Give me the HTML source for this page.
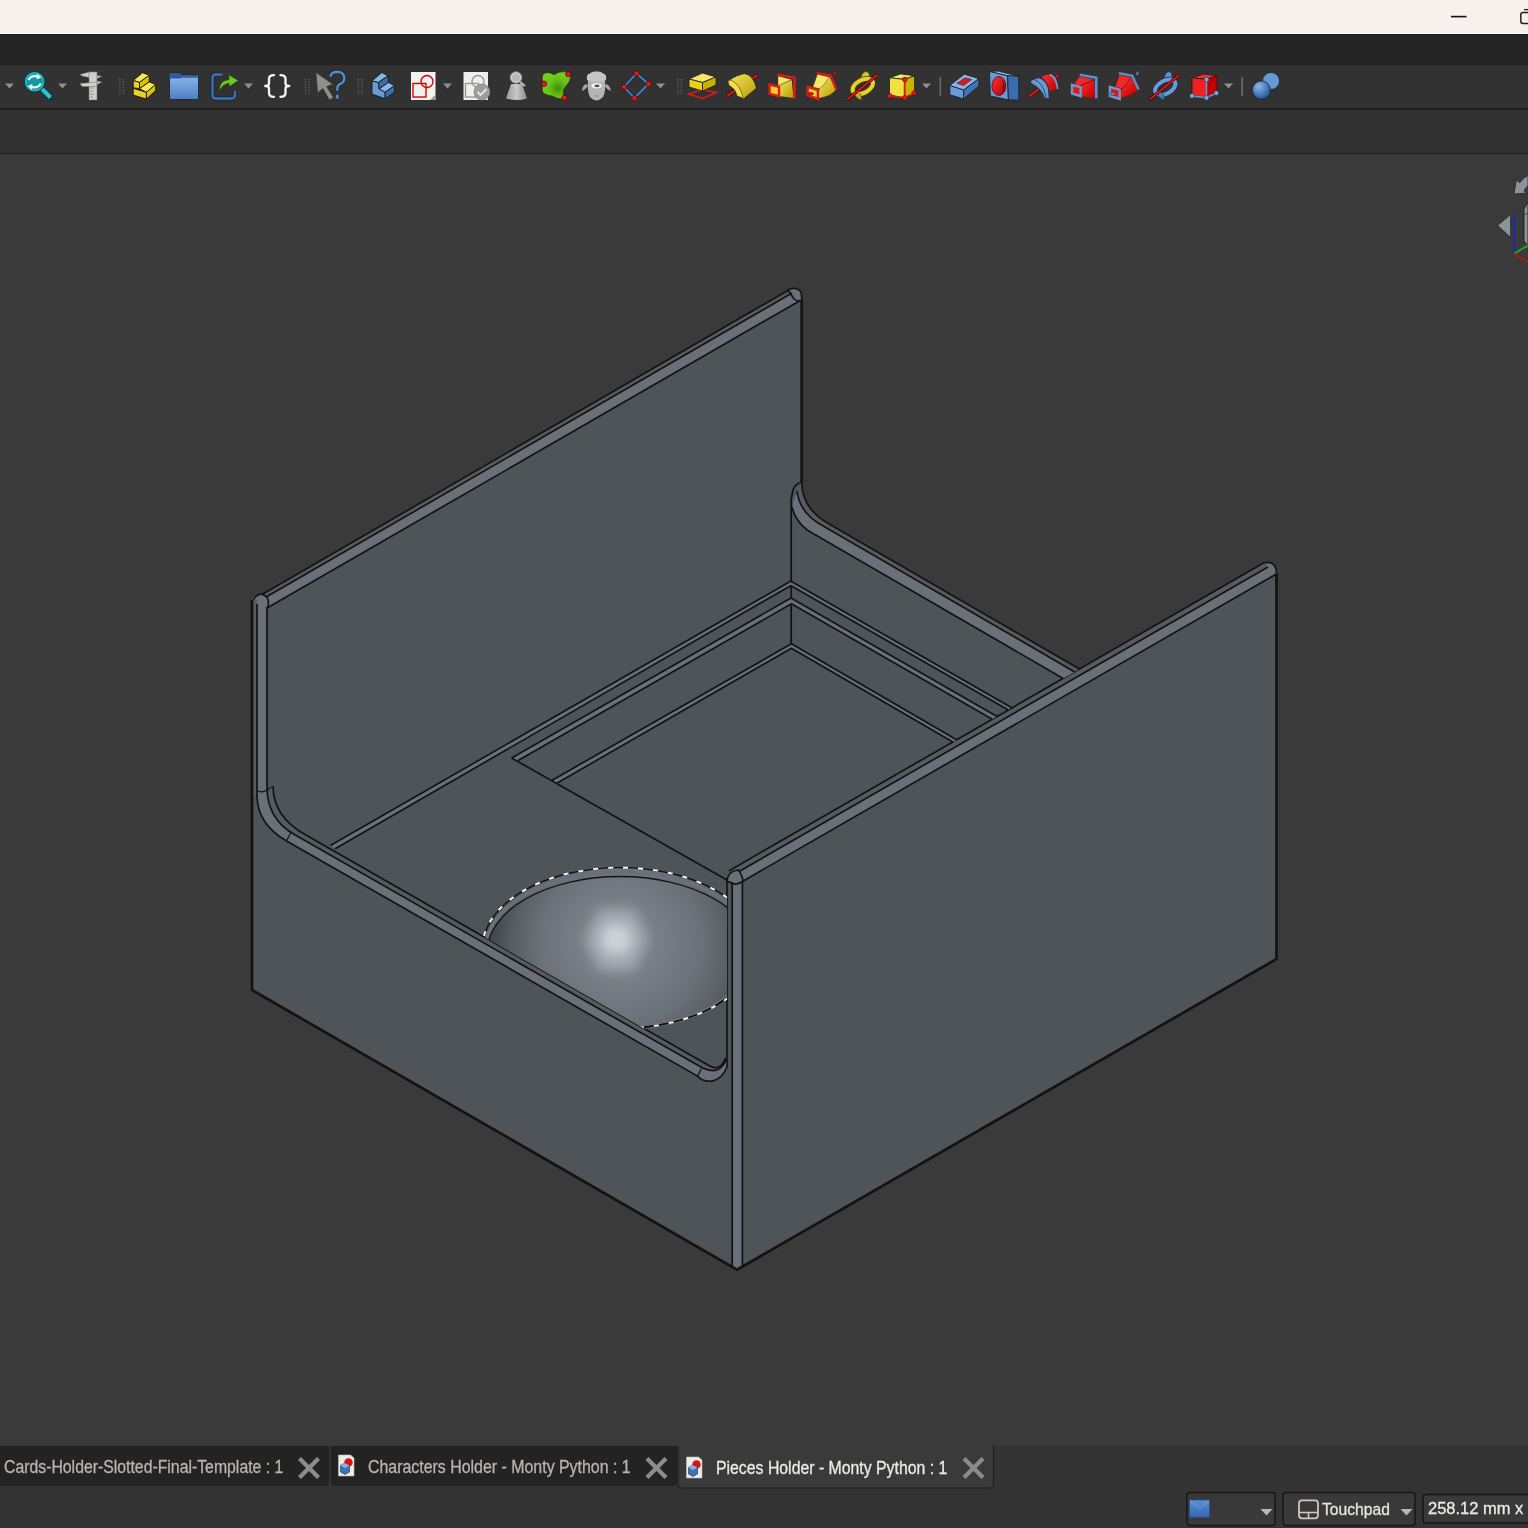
<!DOCTYPE html>
<html><head><meta charset="utf-8">
<style>
html,body{margin:0;padding:0;}
body{width:1528px;height:1528px;overflow:hidden;position:relative;background:#3a3a3a;font-family:"Liberation Sans",sans-serif;}
.abs{position:absolute;}
#title{left:0;top:0;width:1528px;height:33px;background:#f8f0eb;}
#title2{left:0;top:33px;width:1528px;height:1px;background:#fffdf9;}
#menu{left:0;top:34px;width:1528px;height:31px;background:#252525;border-top:1px solid #1c1c1c;box-sizing:border-box;border-bottom:1px solid #212121;}
#tb1{left:0;top:65px;width:1528px;height:43px;background:#323232;}
#ln1{left:0;top:108px;width:1528px;height:2px;background:#1f1f1f;}
#tb2{left:0;top:110px;width:1528px;height:43px;background:#323232;}
#ln2{left:0;top:153px;width:1528px;height:1px;background:#1f1f1f;}
#view{left:0;top:154px;width:1528px;height:1292px;background:#3a3a3a;}
#bottom{left:0;top:1446px;width:1528px;height:82px;background:#333333;}
svg{position:absolute;left:0;top:0;}
.t{position:absolute;font-size:17px;line-height:20px;white-space:nowrap;transform-origin:0 0;-webkit-text-stroke:0.3px currentColor;}
</style></head><body>
<div class="abs" id="title"></div><div class="abs" id="title2"></div>
<div class="abs" id="menu"></div>
<div class="abs" id="tb1"></div><div class="abs" id="ln1"></div>
<div class="abs" id="tb2"></div><div class="abs" id="ln2"></div>
<div class="abs" id="view"></div>
<div class="abs" id="bottom"></div>
<svg width="1528" height="1528" viewBox="0 0 1528 1528">
<path fill="#4f5459" d="M252,600 Q254,594 262,594.5 L788,290.4 Q800,288 802,300 L801.7,482 Q801.7,508 827.4,522.9 L1079.4,669.1 L1263.5,563 Q1274,562 1276.5,574 L1276.5,959 L737,1269.7 L252,990 Z"/>
<polygon fill="#565b60" points="262.0,594.5 788.0,290.4 792.0,293.1 267.0,596.6"/>
<polygon fill="#6b7078" points="262.0,599.5 795.0,291.4 800.3,300.4 266.6,608.3"/>
<path fill="#6b7078" stroke="#131313" stroke-width="1.7" d="M253,602 Q254,595 262,594 L267,597 Q270,604 267,608 Q260,611 257,607 Z"/>
<path fill="#6b7078" stroke="#131313" stroke-width="1.7" d="M788,290 Q796,286 801,292 L802,300 Q797,302 794,299 Z"/>
<path fill="#6b7078" stroke="#131313" stroke-width="1.7" d="M1263.5,563 Q1270,561 1274,565 Q1277,569 1276.5,574 L1272,575 Q1270,570 1266,568 Z"/>
<line x1="262" y1="594.5" x2="788" y2="290.4" stroke="#131313" stroke-width="1.7"/>
<line x1="267" y1="596.6" x2="792" y2="293.1" stroke="#131313" stroke-width="1.7"/>
<line x1="266.6" y1="608.3" x2="800.3" y2="300.4" stroke="#131313" stroke-width="1.7"/>
<rect x="252" y="600" width="5" height="195" fill="#565b60"/>
<path fill="#6b7078" d="M257,606 L257,795 Q257,824.1 287,841.3 L697.5,1076.1 C705,1084 720,1084 727,1067 L726.3,1059 Q720,1076 702.7,1068.1 L294,834.3 Q267,818.8 267,787 L267,608 Z"/>
<path fill="#565b60" d="M273,786 Q273,816.3 305,834.6 L709.3,1065.8 Q720,1072 725.6,1058 L726.3,1059 Q720,1076 702.7,1068.1 L294,834.3 Q267,818.8 267,787 Z"/>
<path fill="none" stroke="#131313" stroke-width="1.7" d="M257,604 L257,795 Q257,824.1 287,841.3 L697.5,1076.1 C705,1084 720,1084 727,1067"/>
<path fill="none" stroke="#131313" stroke-width="1.7" d="M267,608 L267,787 Q267,818.8 294,834.3 L702.7,1068.1 Q720,1076 726.3,1059"/>
<path fill="none" stroke="#131313" stroke-width="1.7" d="M273,786 Q273,816.3 305,834.6 L709.3,1065.8 Q720,1072 725.6,1058"/>
<path fill="none" stroke="#131313" stroke-width="1.2" d="M257,790.5 Q262,793.5 267,790 L271.7,786.8"/>
<path fill="none" stroke="#131313" stroke-width="1.2" d="M287,840 L291,832"/>
<path fill="none" stroke="#131313" stroke-width="1.2" d="M697.5,1076.5 L701.4,1068.5"/>
<path fill="none" stroke="#131313" stroke-width="1.2" d="M792,504.5 Q796,503 800.5,500"/>
<path fill="none" stroke="#131313" stroke-width="1.2" d="M815,534.4 Q816,528 819.5,525"/>
<polygon fill="#565b60" points="728.8,870.9 1263.5,563.1 1268.0,567.0 733.0,875.0"/>
<polygon fill="#6b7078" points="733.0,875.0 1270.0,565.8 1275.5,574.5 742.4,881.4"/>
<line x1="728.8" y1="870.9" x2="1263.5" y2="563.1" stroke="#131313" stroke-width="1.7"/>
<line x1="733" y1="875.0" x2="1268" y2="567.0" stroke="#131313" stroke-width="1.7"/>
<line x1="742.4" y1="881.4" x2="1275.5" y2="574.5" stroke="#131313" stroke-width="1.7"/>
<rect x="732" y="880" width="10" height="388" fill="#6b7078"/>
<path fill="#6b7078" stroke="#131313" stroke-width="1.7" d="M727,881 Q728,871 738,870 Q742,874 743,881 Q737,886 732,883 Z"/>
<line x1="727" y1="878" x2="727" y2="1067" stroke="#131313" stroke-width="1.7"/>
<line x1="732.2" y1="882" x2="732.2" y2="1268" stroke="#131313" stroke-width="1.7"/>
<line x1="742.4" y1="881" x2="742.4" y2="1266" stroke="#131313" stroke-width="1.7"/>
<path fill="none" stroke="#131313" stroke-width="2.72" d="M252,600 L252,990 L737,1269.7 L1276.5,959 L1276.5,574"/>
<line x1="801.7" y1="300" x2="801.7" y2="482" stroke="#131313" stroke-width="2.72"/>
<path fill="#565b60" d="M801.7,482 Q801.7,508 827.4,522.9 L1079.4,669.1 L1074.7,671.9 L823.2,526 Q800,514 797,491 Z"/>
<path fill="#6b7078" d="M797,491 Q800,514 823.2,526 L1074.7,671.9 L1063.2,678.5 L814.8,534.4 Q797,526 791.8,506.6 Z"/>
<path fill="none" stroke="#131313" stroke-width="1.7" d="M801.7,482 Q801.7,508 827.4,522.9 L1079.4,669.1"/>
<path fill="none" stroke="#131313" stroke-width="1.7" d="M797,491 Q800,514 823.2,526 L1074.7,671.9"/>
<path fill="none" stroke="#131313" stroke-width="1.7" d="M791.8,506.6 Q797,526 814.8,534.4 L1063.2,678.5"/>
<path fill="none" stroke="#131313" stroke-width="1.7" d="M801.7,482 Q793,484 792,495 L791.2,499"/>
<line x1="791.2" y1="499" x2="791.2" y2="644" stroke="#131313" stroke-width="1.7"/>
<polygon fill="#6b7078" points="330.4,845.5 791.0,581.0 791.0,585.5 335.1,848.7"/>
<line x1="330.4" y1="845.5" x2="791" y2="581" stroke="#131313" stroke-width="1.7"/>
<line x1="335.1" y1="848.7" x2="791" y2="585.5" stroke="#131313" stroke-width="1.7"/>
<polygon fill="#6b7078" points="511.6,758.0 791.0,598.0 791.0,604.0 518.1,760.6"/>
<line x1="511.6" y1="758" x2="791" y2="598" stroke="#131313" stroke-width="1.7"/>
<line x1="518.1" y1="760.6" x2="791" y2="604" stroke="#131313" stroke-width="1.7"/>
<polygon fill="#6b7078" points="552.2,780.2 791.0,644.0 791.0,648.5 556.8,783.2"/>
<line x1="552.2" y1="780.2" x2="791" y2="644" stroke="#131313" stroke-width="1.7"/>
<line x1="556.8" y1="783.2" x2="791" y2="648.5" stroke="#131313" stroke-width="1.7"/>
<polygon fill="#6b7078" points="791.0,581.3 1011.4,707.5 1008.4,710.0 791.0,585.7"/>
<line x1="791" y1="581.3" x2="1011.4" y2="707.5" stroke="#131313" stroke-width="1.7"/>
<line x1="791" y1="585.7" x2="1008.4" y2="710" stroke="#131313" stroke-width="1.7"/>
<polygon fill="#6b7078" points="791.0,598.0 997.0,716.6 992.3,719.2 791.0,603.5"/>
<line x1="791" y1="598" x2="997" y2="716.6" stroke="#131313" stroke-width="1.7"/>
<line x1="791" y1="603.5" x2="992.3" y2="719.2" stroke="#131313" stroke-width="1.7"/>
<polygon fill="#6b7078" points="791.0,643.6 957.1,740.1 953.3,742.3 791.0,648.0"/>
<line x1="791" y1="643.6" x2="957.1" y2="740.1" stroke="#131313" stroke-width="1.7"/>
<line x1="791" y1="648" x2="953.3" y2="742.3" stroke="#131313" stroke-width="1.7"/>
<line x1="511.6" y1="758" x2="727" y2="880" stroke="#131313" stroke-width="1.7"/>
<defs><radialGradient id="dg" gradientUnits="userSpaceOnUse" cx="625" cy="948" r="150" fx="615" fy="938"><stop offset="0" stop-color="#9aa0a7"/><stop offset="0.25" stop-color="#7a8087"/><stop offset="0.55" stop-color="#6a7077"/><stop offset="0.72" stop-color="#5a5f65"/><stop offset="0.88" stop-color="#44484d"/><stop offset="1" stop-color="#35383c"/></radialGradient><filter id="hb" x="-50%" y="-50%" width="200%" height="200%"><feGaussianBlur stdDeviation="6"/></filter><clipPath id="dc"><path d="M470,850 L727,850 L727,1080 L700,1060.5 L470,929.0 Z"/></clipPath></defs>
<g clip-path="url(#dc)"><ellipse cx="620" cy="948" rx="137.5" ry="80.4" fill="url(#dg)"/><polygon points="585,939 599,909 634,909 648,939 634,970 599,970" fill="#b4bbc3" filter="url(#hb)" opacity="0.6"/><polygon points="600,939 607,925 626,925 633,939 626,954 607,954" fill="#e2e7ed" filter="url(#hb)" opacity="0.65"/><ellipse cx="620" cy="950" rx="134.5" ry="78" fill="none" stroke="#6b7078" stroke-width="4"/><ellipse cx="620" cy="952.5" rx="133" ry="76" fill="none" stroke="#131313" stroke-width="1.3"/><ellipse cx="620" cy="948" rx="137.5" ry="80.4" fill="none" stroke="#131313" stroke-width="1.3"/><ellipse cx="620" cy="948" rx="137.5" ry="80.4" fill="none" stroke="#ffffff" stroke-width="1.8" stroke-dasharray="5 10"/></g>
<polygon points="5.0,83.5 14.0,83.5 9.5,88.5" fill="#8e8e8e"/>
<line x1="42" y1="89" x2="50.5" y2="97.5" stroke="#0a3a40" stroke-width="6" stroke-linecap="round"/><line x1="42" y1="89" x2="50.5" y2="97.5" stroke="#26c6d2" stroke-width="4"/><circle cx="34.6" cy="81.8" r="10.3" fill="#1cb4c0" stroke="#0a3a40" stroke-width="1"/><circle cx="34.6" cy="81.8" r="7.8" fill="#0f97a4"/><path d="M28.5,80 Q31,75 38,76.5" stroke="#f0f0f0" stroke-width="2.2" fill="none"/><polygon points="37,73.5 41.5,77.5 36.5,79.5" fill="#f0f0f0"/><path d="M40.8,83.5 Q38,88.5 31,87" stroke="#f0f0f0" stroke-width="2.2" fill="none"/><polygon points="32,90 27.5,86 32.5,84" fill="#f0f0f0"/>
<polygon points="58.0,83.5 67.0,83.5 62.5,88.5" fill="#8e8e8e"/>
<g fill="#cfcfca" stroke="#6a6a66" stroke-width="0.5"><polygon points="80,74.5 89,72 97,72 97,79 89,79 89,77.5 82,76"/><rect x="89" y="72" width="8" height="28"/><polygon points="80,83.5 97,82 97,86.5 82,86.5"/><polygon points="97,75.5 102,76.3 97,78.5"/><polygon points="97,81 102,82 97,84.5"/></g><g stroke="#777" stroke-width="0.7"><line x1="90" y1="88" x2="94" y2="88"/><line x1="90" y1="91" x2="93" y2="91"/><line x1="90" y1="94" x2="94" y2="94"/><line x1="90" y1="97" x2="93" y2="97"/></g>
<rect x="119" y="79.0" width="1.6" height="1.2" fill="#5e5e5e"/><rect x="122.6" y="79.0" width="1.6" height="1.2" fill="#5e5e5e"/><rect x="119" y="81.7" width="1.6" height="1.2" fill="#5e5e5e"/><rect x="122.6" y="81.7" width="1.6" height="1.2" fill="#5e5e5e"/><rect x="119" y="84.4" width="1.6" height="1.2" fill="#5e5e5e"/><rect x="122.6" y="84.4" width="1.6" height="1.2" fill="#5e5e5e"/><rect x="119" y="87.1" width="1.6" height="1.2" fill="#5e5e5e"/><rect x="122.6" y="87.1" width="1.6" height="1.2" fill="#5e5e5e"/><rect x="119" y="89.8" width="1.6" height="1.2" fill="#5e5e5e"/><rect x="122.6" y="89.8" width="1.6" height="1.2" fill="#5e5e5e"/><rect x="119" y="92.5" width="1.6" height="1.2" fill="#5e5e5e"/><rect x="122.6" y="92.5" width="1.6" height="1.2" fill="#5e5e5e"/>
<g stroke="#1a1a00" stroke-width="0.9" stroke-linejoin="round"><polygon points="133.2,80.5 142.6,72.7 149.2,75.3 139.5,82.4" fill="#f6ea5a"/><polygon points="133.2,80.5 139.5,82.4 139.5,88.7 133.2,87.8" fill="#e6d02a"/><polygon points="139.5,82.4 149.2,75.3 149.2,81.9 139.5,88.7" fill="#dcc400"/><polygon points="139.5,88.7 149.2,81.9 155.6,84.5 146.4,92.3" fill="#f6ea5a"/><polygon points="133.2,88.3 146.4,92.3 146.4,99.1 133.2,95.1" fill="#e6d02a"/><polygon points="146.4,92.3 155.6,84.5 155.6,90.6 146.4,99.1" fill="#dcc400"/></g>
<path d="M169.5,73 h10 l2,2 h17 v24.5 h-29 z" fill="#6f9ad2" stroke="#1a1a1a" stroke-width="0.8"/><path d="M169.5,73 h10 l2,2.5 h17 v2 h-17 l-2,1.5 h-10 z" fill="#2c5a9e"/><rect x="170" y="78.5" width="28" height="20.5" fill="url(#fg)"/>
<path d="M222.5,74.5 h-6.5 q-3.5,0 -3.5,3.5 v17 q0,3.5 3.5,3.5 h15.5 q3.5,0 3.5,-3.5 v-4" fill="none" stroke="#14243a" stroke-width="3.8"/><path d="M222.5,74.5 h-6.5 q-3.5,0 -3.5,3.5 v17 q0,3.5 3.5,3.5 h15.5 q3.5,0 3.5,-3.5 v-4" fill="none" stroke="#3f74b8" stroke-width="2.3"/><path d="M219.5,92 Q218,80.5 229,79.5 L228.5,74.5 L238.5,80.5 L229,87 L229,83.5 Q222,84 219.5,92 Z" fill="#6cc820" stroke="#1e3808" stroke-width="0.8" stroke-linejoin="round"/>
<polygon points="244.0,83.5 253.0,83.5 248.5,88.5" fill="#8e8e8e"/>
<g fill="none" stroke="#f4f4f4" stroke-width="2.3" stroke-linecap="round" stroke-linejoin="round"><path d="M274,75.2 Q269,75.2 269,79 L269,83.5 Q269,86 265.2,86 Q269,86 269,88.5 L269,93 Q269,96.8 274,96.8"/><path d="M280.5,75.2 Q285.5,75.2 285.5,79 L285.5,83.5 Q285.5,86 289.3,86 Q285.5,86 285.5,88.5 L285.5,93 Q285.5,96.8 280.5,96.8"/></g>
<rect x="304.6" y="79.0" width="1.6" height="1.2" fill="#5e5e5e"/><rect x="308.20000000000005" y="79.0" width="1.6" height="1.2" fill="#5e5e5e"/><rect x="304.6" y="81.7" width="1.6" height="1.2" fill="#5e5e5e"/><rect x="308.20000000000005" y="81.7" width="1.6" height="1.2" fill="#5e5e5e"/><rect x="304.6" y="84.4" width="1.6" height="1.2" fill="#5e5e5e"/><rect x="308.20000000000005" y="84.4" width="1.6" height="1.2" fill="#5e5e5e"/><rect x="304.6" y="87.1" width="1.6" height="1.2" fill="#5e5e5e"/><rect x="308.20000000000005" y="87.1" width="1.6" height="1.2" fill="#5e5e5e"/><rect x="304.6" y="89.8" width="1.6" height="1.2" fill="#5e5e5e"/><rect x="308.20000000000005" y="89.8" width="1.6" height="1.2" fill="#5e5e5e"/><rect x="304.6" y="92.5" width="1.6" height="1.2" fill="#5e5e5e"/><rect x="308.20000000000005" y="92.5" width="1.6" height="1.2" fill="#5e5e5e"/>
<polygon points="316,72.5 332.7,84.3 326.5,86.5 333.4,97.5 329.5,100 323,88.5 317.7,92.5" fill="#8f9089" stroke="#3a3a36" stroke-width="0.6" stroke-linejoin="round"/><path d="M330.6,76 Q331.5,72 337.3,71.9 Q344.3,72 344.3,78.3 Q344.3,82.5 339.8,84.3 Q337.3,85.5 337.3,88.5 L337.3,90" fill="none" stroke="#1a2a40" stroke-width="3.6" stroke-linecap="round"/><path d="M330.6,76 Q331.5,72 337.3,71.9 Q344.3,72 344.3,78.3 Q344.3,82.5 339.8,84.3 Q337.3,85.5 337.3,88.5 L337.3,90" fill="none" stroke="#5b90d0" stroke-width="2.2" stroke-linecap="round"/><rect x="335.6" y="94.3" width="3.4" height="4.8" rx="1.7" fill="#5b90d0" stroke="#1a2a40" stroke-width="0.6"/>
<rect x="357.6" y="79.0" width="1.6" height="1.2" fill="#5e5e5e"/><rect x="361.20000000000005" y="79.0" width="1.6" height="1.2" fill="#5e5e5e"/><rect x="357.6" y="81.7" width="1.6" height="1.2" fill="#5e5e5e"/><rect x="361.20000000000005" y="81.7" width="1.6" height="1.2" fill="#5e5e5e"/><rect x="357.6" y="84.4" width="1.6" height="1.2" fill="#5e5e5e"/><rect x="361.20000000000005" y="84.4" width="1.6" height="1.2" fill="#5e5e5e"/><rect x="357.6" y="87.1" width="1.6" height="1.2" fill="#5e5e5e"/><rect x="361.20000000000005" y="87.1" width="1.6" height="1.2" fill="#5e5e5e"/><rect x="357.6" y="89.8" width="1.6" height="1.2" fill="#5e5e5e"/><rect x="361.20000000000005" y="89.8" width="1.6" height="1.2" fill="#5e5e5e"/><rect x="357.6" y="92.5" width="1.6" height="1.2" fill="#5e5e5e"/><rect x="361.20000000000005" y="92.5" width="1.6" height="1.2" fill="#5e5e5e"/>
<g stroke="#1a1a1a" stroke-width="0.9" stroke-linejoin="round"><polygon points="372,81 378.5,82.4 379.2,88.9 385.1,92.2 385.1,98.7 372,94.1" fill="#6a9ad6"/><polygon points="372,81 381.8,72.5 388,75.8 378.5,82.4" fill="#8ab4e6"/><polygon points="378.5,82.4 388,75.8 388.4,82.4 379.2,88.9" fill="#3a6cb0"/><polygon points="379.2,88.9 388.4,82.4 394.6,85.6 385.1,92.2" fill="#8ab4e6"/><polygon points="385.1,92.2 394.6,85.6 394.6,92.2 385.1,98.7" fill="#3a6cb0"/></g>
<rect x="411" y="72" width="24.5" height="28" fill="#f2f2ee"/><polygon points="430,100 435.5,94.5 435.5,100" fill="#9a9a9a"/><circle cx="427" cy="81.5" r="6" fill="none" stroke="#e00000" stroke-width="1.4"/><rect x="413" y="83.5" width="13" height="13.5" fill="none" stroke="#e00000" stroke-width="1.4"/>
<polygon points="443.0,83.5 452.0,83.5 447.5,88.5" fill="#8e8e8e"/>
<rect x="463.5" y="72" width="24.5" height="28" fill="#efefec"/><circle cx="478" cy="81.5" r="6" fill="none" stroke="#9a9a9a" stroke-width="1.4"/><rect x="465.5" y="83.5" width="13" height="13.5" fill="none" stroke="#9a9a9a" stroke-width="1.4"/><circle cx="482" cy="92" r="8" fill="#9d9d9d" stroke="#777" stroke-width="0.6"/><path d="M477.5,92 l3,3 l6,-6" fill="none" stroke="#e8e8e8" stroke-width="1.8"/>
<defs><linearGradient id="cg" x1="0" x2="1"><stop offset="0" stop-color="#9a9a9a"/><stop offset="0.5" stop-color="#c8c8c8"/><stop offset="1" stop-color="#8a8a8a"/></linearGradient></defs><path d="M511,84 L506,98.5 Q516.5,101.5 527,98.5 L522,84 Z" fill="url(#cg)"/><line x1="519" y1="81" x2="525" y2="86" stroke="#bdbdbd" stroke-width="2"/><circle cx="516" cy="77.5" r="5.8" fill="#d0d0d0" stroke="#8a8a8a" stroke-width="0.9"/><circle cx="516" cy="77.5" r="4" fill="#b8b8b8"/>
<defs><radialGradient id="gg" cx="0.55" cy="0.6" r="0.55"><stop offset="0" stop-color="#3c900c"/><stop offset="0.55" stop-color="#66c018"/><stop offset="1" stop-color="#74d01c"/></radialGradient></defs><path d="M543.5,74 Q548,71 554,74.8 Q559,71 565,71.8 Q571,72.5 570.5,77 Q570,82 566,86 Q562,90 563.5,95 L565,99 Q558,99.5 552,96 Q543,94.5 542.4,91 L542.4,80 Q542,75 543.5,74 Z" fill="url(#gg)" stroke="#1e3a08" stroke-width="0.6"/><circle cx="568.3" cy="74.2" r="2.65" fill="#e41a1a" stroke="#4a0000" stroke-width="0.7"/><circle cx="544.1" cy="83.7" r="2.65" fill="#e41a1a" stroke="#4a0000" stroke-width="0.7"/><circle cx="564.5" cy="97.8" r="2.65" fill="#e41a1a" stroke="#4a0000" stroke-width="0.7"/>
<g filter="url(#sb)"><path d="M586,84 Q582,86 582,91 Q586,89 588,86 Z" fill="#a8a8a8"/><path d="M606.5,84 Q610.5,86 610.7,91 Q606.5,89 604.5,86 Z" fill="#a8a8a8"/><path d="M588,80 Q587,92 590,97 Q594,100.5 596.5,100.5 Q599,100.5 603,97 Q606,92 605,80 Z" fill="#b4b4b4"/><path d="M587,80 Q586,74 590,73.5 Q592,71 596.5,71.5 Q601,71 603,73.5 Q607,74 606,80 Q596.5,84 587,80 Z" fill="#c6c6c6"/></g><ellipse cx="596.6" cy="85.8" rx="5.2" ry="2.8" fill="#f4f4f4"/><ellipse cx="597" cy="85.9" rx="2.6" ry="1.3" fill="#555"/><path d="M594.3,95 L596.6,96.6 L598.9,95" fill="none" stroke="#808080" stroke-width="0.8"/><defs><filter id="sb"><feGaussianBlur stdDeviation="0.4"/></filter></defs>
<polygon points="636.5,73.5 648.5,84 634.5,98 624,87" fill="none" stroke="#1a2a40" stroke-width="3"/><polygon points="636.5,73.5 648.5,84 634.5,98 624,87" fill="none" stroke="#4a82c4" stroke-width="1.8"/><g fill="#e41a1a" stroke="#4a0000" stroke-width="0.6"><circle cx="636.5" cy="73.5" r="2.6"/><circle cx="648.5" cy="84" r="2.6"/><circle cx="634.5" cy="98" r="2.6"/><circle cx="624" cy="87" r="2.6"/></g>
<polygon points="656.0,83.5 665.0,83.5 660.5,88.5" fill="#8e8e8e"/>
<rect x="677" y="79.0" width="1.6" height="1.2" fill="#5e5e5e"/><rect x="680.6" y="79.0" width="1.6" height="1.2" fill="#5e5e5e"/><rect x="677" y="81.7" width="1.6" height="1.2" fill="#5e5e5e"/><rect x="680.6" y="81.7" width="1.6" height="1.2" fill="#5e5e5e"/><rect x="677" y="84.4" width="1.6" height="1.2" fill="#5e5e5e"/><rect x="680.6" y="84.4" width="1.6" height="1.2" fill="#5e5e5e"/><rect x="677" y="87.1" width="1.6" height="1.2" fill="#5e5e5e"/><rect x="680.6" y="87.1" width="1.6" height="1.2" fill="#5e5e5e"/><rect x="677" y="89.8" width="1.6" height="1.2" fill="#5e5e5e"/><rect x="680.6" y="89.8" width="1.6" height="1.2" fill="#5e5e5e"/><rect x="677" y="92.5" width="1.6" height="1.2" fill="#5e5e5e"/><rect x="680.6" y="92.5" width="1.6" height="1.2" fill="#5e5e5e"/>
<polygon points="688.5,94 702.5,89.5 716.5,92.5 702.5,98.5" fill="none" stroke="#e01818" stroke-width="1.6"/><g stroke="#1a1a1a" stroke-width="0.8" stroke-linejoin="round"><polygon points="689,79 702.5,73 716,77 702.5,82.5" fill="#f4e66a"/><polygon points="689,79 702.5,82.5 702.5,91 689,87" fill="#e6d21a"/><polygon points="702.5,82.5 716,77 716,85 702.5,91" fill="#c8b200"/></g>
<defs><linearGradient id="yg1" x1="0" y1="0" x2="1" y2="1"><stop offset="0" stop-color="#f4e660"/><stop offset="1" stop-color="#b89c00"/></linearGradient><linearGradient id="rg1" x1="0" y1="0" x2="1" y2="1"><stop offset="0" stop-color="#ff3030"/><stop offset="1" stop-color="#b80000"/></linearGradient><linearGradient id="bg1" x1="0" y1="0" x2="1" y2="1"><stop offset="0" stop-color="#8ab4e6"/><stop offset="1" stop-color="#3466b0"/></linearGradient></defs>
<line x1="727.5" y1="95.8" x2="757" y2="75.4" stroke="#1a0000" stroke-width="3.4" stroke-linecap="round"/><line x1="727.5" y1="95.8" x2="757" y2="75.4" stroke="#e01818" stroke-width="2.2" stroke-linecap="round"/>
<path d="M727.9,80.9 Q736,75 744.4,73.5 Q753,74.5 756.6,88 L743.6,99 L737,95.8 Q736,89 729.1,85.6 Z" fill="url(#yg1)" stroke="#1a1a1a" stroke-width="0.8"/><path d="M727.9,80.9 L731,80.1 Q740,84 743.2,98.2 L737,95.8 Q735.5,88.5 729.1,85.6 Z" fill="#f0e050" stroke="#4a4000" stroke-width="0.6"/>
<polygon points="778.2,85.6 778.2,76.2 791.6,79.7 779,86.8" fill="#f4e868"/><polygon points="779,86.8 791.6,79.7 793.5,98 779,96" fill="url(#yg1)"/><line x1="778.2" y1="85.6" x2="791.6" y2="79.7" stroke="#4a4000" stroke-width="0.6"/><polyline points="777.4,74.8 794.5,77.8 794.5,98.5" fill="none" stroke="#e01818" stroke-width="2.6"/><polygon points="769.6,84.5 779,86.8 779,96.2 769.6,93.9" fill="#e8d430" stroke="#e01818" stroke-width="2.4"/>
<path d="M818,89.6 L835.5,89.6 Q833,96 818,98.2 Z" fill="#c8a800"/><path d="M812.8,87.2 Q816,78 817.5,73.9 L829.3,77 Q825,85 819.8,88.8 Z" fill="#f4e868" stroke="#4a4000" stroke-width="0.6"/><path d="M819.8,88.8 Q825,85 829.3,77 L836.3,89.6 Q830,95 818,98 Z" fill="url(#yg1)"/><polyline points="816.7,73.2 830.8,75.8 836.3,89.6" fill="none" stroke="#e01818" stroke-width="2.4"/><ellipse cx="834.8" cy="73.5" rx="1.3" ry="2" fill="#e01818" stroke="#300" stroke-width="0.4" transform="rotate(25 834.8 73.5)"/><polygon points="807.7,86.8 817.9,90 817.9,99 807.7,95.5" fill="#e8d430" stroke="#e01818" stroke-width="2.4"/><ellipse cx="810.8" cy="93.8" rx="2.8" ry="1.3" fill="#e01818" stroke="#300" stroke-width="0.5"/>
<path d="M860.4,79.4 Q862,72 866,71.5 Q870,72 869.9,79" fill="#d8c428" stroke="#4a4000" stroke-width="0.6"/><ellipse cx="862.8" cy="86.4" rx="11" ry="6.5" transform="rotate(-28 862.8 86.4)" fill="none" stroke="#4a4000" stroke-width="5.4"/><ellipse cx="862.8" cy="86.4" rx="11" ry="6.5" transform="rotate(-28 862.8 86.4)" fill="none" stroke="#e4d030" stroke-width="4"/><path d="M854,92 Q856,99.5 862,99.8 L860,93" fill="#c8b020" stroke="#4a4000" stroke-width="0.6"/><line x1="847.9" y1="99" x2="876.9" y2="75.4" stroke="#1a0000" stroke-width="3" stroke-linecap="round"/><line x1="847.9" y1="99" x2="876.9" y2="75.4" stroke="#e01818" stroke-width="2" stroke-linecap="round"/>
<g stroke="#1a1a1a" stroke-width="0.8" stroke-linejoin="round"><polygon points="889.5,77.8 900.5,73.9 914.6,75.8 904.4,79.4" fill="#f4e66a"/><polygon points="889.5,77.8 904.4,79.4 904.4,97.8 889.5,95.1" fill="#f0e040"/><polygon points="904.4,79.4 914.6,75.8 914.6,92.7 904.4,97.8" fill="#c8b200"/></g><g stroke="#e01818" stroke-width="1.6" fill="none"><line x1="904.8" y1="79.5" x2="904.8" y2="97.8"/><polyline points="889.9,95.9 904.8,97.8 914.2,93.1"/></g><g fill="#e41a1a" stroke="#4a0000" stroke-width="0.5"><circle cx="904.8" cy="79.5" r="2.4"/><circle cx="889.9" cy="95.9" r="2.4"/><circle cx="904.8" cy="97.8" r="2.4"/><circle cx="914.2" cy="93.1" r="2.4"/></g>
<polygon points="922.0,83.5 931.0,83.5 926.5,88.5" fill="#8e8e8e"/>
<rect x="939.5" y="77" width="1.6" height="19" fill="#6a6a6a"/>
<g stroke="#1a1a1a" stroke-width="0.8" stroke-linejoin="round"><polygon points="949.8,85.6 964.3,74.2 978.9,78.6 963.6,90" fill="#8ab4e6"/><polygon points="949.8,85.6 963.6,90 963.6,99 949.8,94.7" fill="#6a9ad6"/><polygon points="963.6,90 978.9,78.6 978.9,86 963.6,99" fill="#3f72b6"/></g><polygon points="956.9,83.3 965.1,77.8 971.8,79.5 963.6,85.6" fill="#e01818" stroke="#1a2a40" stroke-width="0.6"/>
<g stroke="#1a1a1a" stroke-width="0.8" stroke-linejoin="round"><polygon points="989.5,71.5 998.1,71.1 1018.6,76.2 1007.6,75.8" fill="#9cc0ea"/><polygon points="989.5,71.5 1007.6,75.8 1008.4,99.8 990.3,95.9" fill="#6a9ad6"/><polygon points="1007.6,75.8 1018.6,76.2 1019,100.2 1008.4,99.8" fill="#3a6cb0"/></g><ellipse cx="998.9" cy="86" rx="7" ry="9.4" fill="url(#rg1)" stroke="#3a0000" stroke-width="0.7"/><path d="M1002,79 Q1006,86 1002.5,94 Q1004,86 1002,79 Z" fill="#202020"/>
<line x1="1029.6" y1="95.9" x2="1058.6" y2="75.4" stroke="#1a0000" stroke-width="3" stroke-linecap="round"/><line x1="1029.6" y1="95.9" x2="1058.6" y2="75.4" stroke="#e01818" stroke-width="2" stroke-linecap="round"/><path d="M1041.3,77 Q1044,73.9 1050.8,73.9 Q1057,76 1058.6,88.8 L1057,89.6 L1049.2,91.9 Q1048,83 1041.3,77 Z" fill="url(#rg1)" stroke="#1a2a40" stroke-width="0.7"/><path d="M1050.8,73.9 Q1057,76 1058.6,88.8 L1057,89.6 Q1055.5,78 1049,74.8 Z" fill="#6a9ad6"/><path d="M1030.3,80.9 Q1035,78 1039,77.8 Q1046,80 1048.5,89 L1049.2,99 L1044.5,98.2 Q1042,90 1035,85.6 L1031.1,83.3 Z" fill="#6a9ad6" stroke="#1a2a40" stroke-width="0.8"/><path d="M1034,79.5 Q1043,82 1046.5,98.5" fill="none" stroke="#1a2a40" stroke-width="0.7"/>
<polygon points="1074.3,84 1079.8,76.6 1094,79.7 1081.4,86" fill="#f02828"/><polygon points="1081.4,86 1094,79.7 1095.5,98 1080.6,96.2" fill="url(#rg1)"/><line x1="1079" y1="86.5" x2="1094" y2="79.7" stroke="#3a0000" stroke-width="0.6"/><polyline points="1079.8,74.8 1096.3,77.8 1096.3,98.2" fill="none" stroke="#5b90d0" stroke-width="2.6"/><polygon points="1072,84.9 1080.6,87.2 1080.6,96.2 1072,93.5" fill="#e01818" stroke="#6a9ad6" stroke-width="2.4"/>
<path d="M1119.7,89.6 L1137.5,89.6 Q1135,96 1119.7,98.2 Z" fill="#b00000"/><path d="M1114.6,87.2 Q1118,78 1119.3,74.6 L1130.7,77 Q1127,85 1122,88.8 Z" fill="#f02828" stroke="#3a0000" stroke-width="0.6"/><path d="M1122,88.8 Q1127,85 1130.7,77 L1138.6,89.6 Q1132,95 1119.7,98 Z" fill="url(#rg1)"/><polyline points="1118.9,73.2 1132.3,75.8 1138.6,89.6" fill="none" stroke="#5b90d0" stroke-width="2.4"/><ellipse cx="1137.4" cy="73.5" rx="1.3" ry="2" fill="#5b90d0" stroke="#123" stroke-width="0.4" transform="rotate(25 1137.4 73.5)"/><polygon points="1109.9,86.8 1119.7,89.6 1119.7,99 1109.9,95.9" fill="#e01818" stroke="#6a9ad6" stroke-width="2.4"/><ellipse cx="1112.6" cy="93.8" rx="2.8" ry="1.3" fill="#6a9ad6" stroke="#123" stroke-width="0.5"/>
<path d="M1163.7,79.4 Q1165,72 1169,71.5 Q1173,72 1171.6,79" fill="#5a8ecc" stroke="#1a2a40" stroke-width="0.6"/><ellipse cx="1165.3" cy="87.2" rx="11" ry="6.5" transform="rotate(-28 1165.3 87.2)" fill="none" stroke="#1a2a40" stroke-width="5.4"/><ellipse cx="1165.3" cy="87.2" rx="11" ry="6.5" transform="rotate(-28 1165.3 87.2)" fill="none" stroke="#6a9ad6" stroke-width="4"/><path d="M1157.4,92 Q1159,99.5 1164.5,99.8 L1163,93" fill="#4a7ec0" stroke="#1a2a40" stroke-width="0.6"/><line x1="1150.3" y1="99" x2="1178.6" y2="75.4" stroke="#1a0000" stroke-width="3" stroke-linecap="round"/><line x1="1150.3" y1="99" x2="1178.6" y2="75.4" stroke="#e01818" stroke-width="2" stroke-linecap="round"/>
<g stroke="#1a1a1a" stroke-width="0.8" stroke-linejoin="round"><polygon points="1192,77.8 1203.8,73.9 1217.1,75.8 1206.9,79.4" fill="#f03030"/><polygon points="1192,77.8 1206.9,79.4 1206.9,97.8 1192,95.1" fill="#ee2222"/><polygon points="1206.9,79.4 1217.1,75.8 1217.1,92.7 1206.9,97.8" fill="#c00000"/></g><g stroke="#6a9ad6" stroke-width="1.6" fill="none"><line x1="1206.5" y1="79.5" x2="1206.5" y2="97.8"/><polyline points="1192,95.9 1206.5,97.8 1216.3,93.1"/></g><g fill="#7aa6dc" stroke="#1a2a40" stroke-width="0.5"><circle cx="1206.5" cy="79.5" r="2.4"/><circle cx="1192" cy="95.9" r="2.4"/><circle cx="1206.5" cy="97.8" r="2.4"/><circle cx="1216.3" cy="93.1" r="2.4"/></g>
<polygon points="1224.0,83.5 1233.0,83.5 1228.5,88.5" fill="#8e8e8e"/>
<rect x="1241.4" y="77" width="1.6" height="19" fill="#6a6a6a"/>
<defs><radialGradient id="sg" cx="0.35" cy="0.3" r="0.8"><stop offset="0" stop-color="#8cb6e6"/><stop offset="0.7" stop-color="#3a6cb0"/><stop offset="1" stop-color="#2a5090"/></radialGradient></defs><circle cx="1271" cy="81" r="8.5" fill="#6a9ad6" stroke="#1a2a40" stroke-width="0.8"/><circle cx="1261.5" cy="90" r="9" fill="url(#sg)" stroke="#1a2a40" stroke-width="0.8"/>
<g><polygon points="1497.6,225.5 1510.6,214.6 1510.6,237.3" fill="#8a949c" stroke="#2a2a2a" stroke-width="0.8"/><path d="M1514,194 L1516.5,179.5 L1519.5,183 Q1524,177 1528,175.5 L1528,186 Q1525,188 1524,191 L1527,193 Z" fill="#8a949c" stroke="#2a2a2a" stroke-width="0.8"/><polygon points="1524,209 1528,202 1528,246 1524,241" fill="#8d969e" stroke="#222" stroke-width="1"/><line x1="1524" y1="215" x2="1528" y2="213" stroke="#333" stroke-width="0.8"/><line x1="1514.3" y1="213" x2="1514.3" y2="253.5" stroke="#1a2aa0" stroke-width="2.2"/><line x1="1514.3" y1="253.5" x2="1528" y2="245.5" stroke="#18b018" stroke-width="2"/><line x1="1514.3" y1="254" x2="1528" y2="262" stroke="#b01818" stroke-width="2"/></g>
<rect x="1451" y="15.8" width="15.5" height="1.6" fill="#111"/><rect x="1520.8" y="12.5" width="12" height="11" rx="2.2" fill="none" stroke="#222" stroke-width="1.5"/><line x1="1524" y1="9.6" x2="1530" y2="9.6" stroke="#222" stroke-width="1.3"/>
<path d="M0,1446 H329 V1482 Q329,1486 325,1486 H0 Z" fill="#232323"/>
<path d="M331,1446 H677 V1482 Q677,1486 673,1486 H335 Q331,1486 331,1482 Z" fill="#232323"/>
<path d="M678,1446 H993.5 V1484 Q993.5,1488 989.5,1488 H682 Q678,1488 678,1484 Z" fill="#3a3a3a" stroke="#1e1e1e" stroke-width="1.2"/><rect x="678.6" y="1440" width="314.3" height="7" fill="#3a3a3a"/>
<g stroke="#8c8c8c" stroke-width="4.3" stroke-linecap="butt"><line x1="299.5" y1="1458.5" x2="318.5" y2="1477.5"/><line x1="318.5" y1="1458.5" x2="299.5" y2="1477.5"/></g>
<g stroke="#8c8c8c" stroke-width="4.3" stroke-linecap="butt"><line x1="647" y1="1458.5" x2="666" y2="1477.5"/><line x1="666" y1="1458.5" x2="647" y2="1477.5"/></g>
<g stroke="#8c8c8c" stroke-width="4.3" stroke-linecap="butt"><line x1="964" y1="1458.5" x2="983" y2="1477.5"/><line x1="983" y1="1458.5" x2="964" y2="1477.5"/></g>
<g transform="translate(338,1454.5)"><path d="M0.5,0.5 h12 l3.5,3 v18 h-15.5 z" fill="#ecece8" stroke="#bdbdb8" stroke-width="0.6"/><circle cx="10.5" cy="8" r="4.2" fill="#e01010"/><polygon points="2.5,11 7,8.5 11.5,11 11.5,17.5 7,20 2.5,17.5" fill="#3f72b6" stroke="#1a2a40" stroke-width="0.6"/><polygon points="2.5,11 7,8.5 11.5,11 7,13.5" fill="#8ab4e6"/></g>
<g transform="translate(686,1456.5)"><path d="M0.5,0.5 h12 l3.5,3 v18 h-15.5 z" fill="#ecece8" stroke="#bdbdb8" stroke-width="0.6"/><circle cx="10.5" cy="8" r="4.2" fill="#e01010"/><polygon points="2.5,11 7,8.5 11.5,11 11.5,17.5 7,20 2.5,17.5" fill="#3f72b6" stroke="#1a2a40" stroke-width="0.6"/><polygon points="2.5,11 7,8.5 11.5,11 7,13.5" fill="#8ab4e6"/></g>
<rect x="1187" y="1492.5" width="88" height="33" rx="3" fill="#393939" stroke="#151515" stroke-width="1.4"/><defs><linearGradient id="bl" x1="0" y1="0" x2="0" y2="1"><stop offset="0" stop-color="#5b8fd6"/><stop offset="1" stop-color="#3466b0"/></linearGradient><linearGradient id="fg" x1="0" y1="0" x2="0" y2="1"><stop offset="0" stop-color="#86b0e4"/><stop offset="1" stop-color="#4c80c4"/></linearGradient></defs><rect x="1189.5" y="1500" width="20" height="17.5" fill="url(#bl)" stroke="#2a4a80" stroke-width="0.6"/><polyline points="1190,1500.5 1199.5,1509 1209,1500.5" fill="none" stroke="#7aa6e0" stroke-width="0.8"/><polygon points="1260.5,1509 1272.5,1509 1266.5,1515.5" fill="#b8b8b8"/>
<rect x="1283" y="1492.5" width="132" height="33" rx="3" fill="#393939" stroke="#151515" stroke-width="1.4"/><rect x="1299" y="1500.3" width="19" height="18" rx="3" fill="none" stroke="#cfc8c4" stroke-width="1.8"/><line x1="1299" y1="1512.5" x2="1318" y2="1512.5" stroke="#cfc8c4" stroke-width="1.6"/><line x1="1308.5" y1="1512.5" x2="1308.5" y2="1518" stroke="#cfc8c4" stroke-width="1.6"/><polygon points="1400.5,1509 1412.5,1509 1406.5,1515.5" fill="#b8b8b8"/>
<rect x="1423" y="1494.5" width="120" height="28.5" rx="3" fill="#393939" stroke="#151515" stroke-width="1.4"/>
</svg>

<div class="t" style="left:3.5px;top:1456.7px;color:#b9b5ad;font-size:18px;transform:scaleX(0.878)">Cards-Holder-Slotted-Final-Template : 1</div>
<div class="t" style="left:368px;top:1456.7px;color:#b9b5ad;font-size:18px;transform:scaleX(0.884)">Characters Holder - Monty Python : 1</div>
<div class="t" style="left:716px;top:1457.7px;color:#ecebe8;font-size:18px;transform:scaleX(0.879)">Pieces Holder - Monty Python : 1</div>
<div class="t" style="left:1321.5px;top:1499.6px;color:#e8e6e2;font-size:17px;transform:scaleX(0.92)">Touchpad</div>
<div class="t" style="left:1427.5px;top:1499px;color:#ecebe8;font-size:17px;transform:scaleX(0.97)">258.12 mm x</div>

</body></html>
